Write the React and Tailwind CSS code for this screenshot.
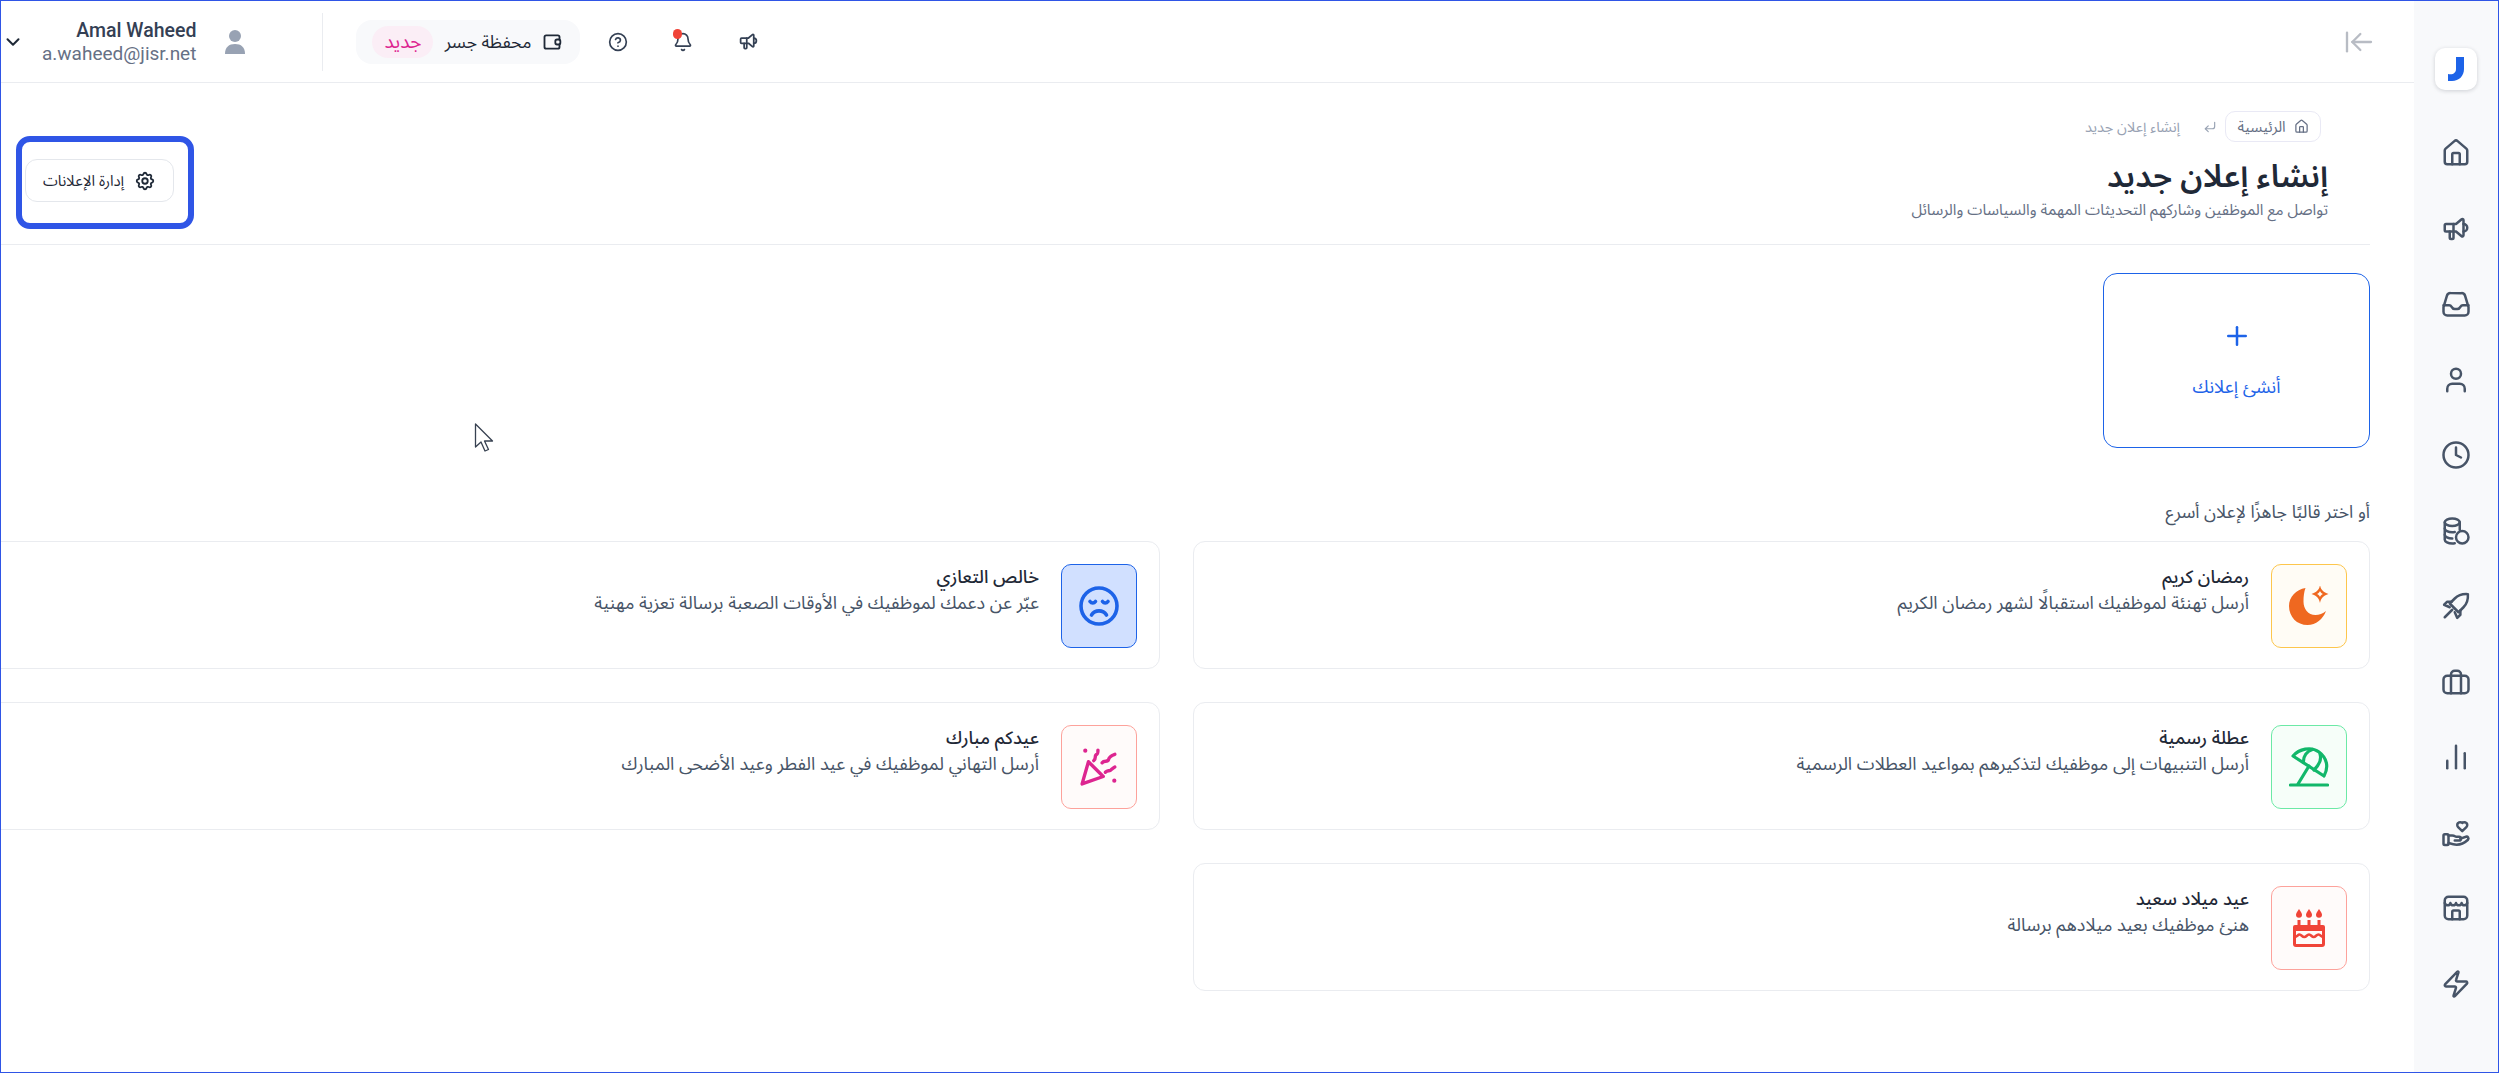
import React from "react";
import { ChevronDown, CircleHelp, Bell, House, User, Clock, ChartNoAxesColumn, Zap, Plus, CornerDownLeft, ArrowLeftToLine } from "lucide-react";
import { TbSettings, TbSpeakerphone } from "react-icons/tb";

const font = { fontFamily: '"Noto Sans", "Noto Sans Arabic", "DejaVu Sans", sans-serif' };

const line = { fill: "none", stroke: "currentColor", strokeWidth: 2, strokeLinecap: "round", strokeLinejoin: "round" };

function InboxIcon({ className }) {
  return (
    <svg className={className} viewBox="0 0 24 24" {...line}>
      <path d="M2 14.500l2.700-9A3 3 0 0 1 7.600 3.300h8.800a3 3 0 0 1 2.900 2.200l2.700 9v3.700a3 3 0 0 1-3 3H5a3 3 0 0 1-3-3z" />
      <path d="M2 13h4.500c1 0 1.600.6 2 1.300.5 1 1.500 1.700 2.500 1.700h2c1 0 2-.7 2.500-1.700.4-.7 1-1.300 2-1.300H22" />
    </svg>
  );
}

function RocketIcon({ className }) {
  return (
    <svg className={className} viewBox="0 0 24 24" {...line}>
      <path d="M21.500 2.500c-4-.3-8 1-10.500 3.500L7 10l7 7 4-4c2.500-2.500 3.800-6.500 3.500-10.500z" />
      <path d="M8.500 8.500H5L2.500 11l4.500 2" />
      <path d="M15.500 15.500V19L13 21.500 11 17" />
      <path d="M9 15l-6 6" />
    </svg>
  );
}

function HandIcon({ className }) {
  return (
    <svg className={className} viewBox="0 0 24 24" {...line}>
      <path d="M17 10.500l-3.300-3.200a2.300 2.300 0 0 1 0-3.300 2.300 2.300 0 0 1 3.300 0 2.300 2.300 0 0 1 3.300 0 2.300 2.300 0 0 1 0 3.300z" />
      <rect x="2" y="13" width="4" height="8.500" rx="1" />
      <path d="M6 14h3c1 0 2 .5 3 1h2.500a1.500 1.500 0 0 1 0 3H11" />
      <path d="M15.500 16.500l4.500-1.500a1.500 1.500 0 0 1 1.600 2.400c-3 2.800-6 4-9.100 4-2 0-4-.6-6.500-1.400" />
    </svg>
  );
}

function CoinsIcon({ className }) {
  return (
    <svg className={className} viewBox="0 0 24 24" {...line}>
      <ellipse cx="9" cy="5" rx="6" ry="3" />
      <path d="M3 5v14c0 1.600 2.700 3 6 3 .8 0 1.500-.1 2-.2" />
      <path d="M3 10c0 1.600 2.700 3 6 3 .8 0 1.500-.1 2-.2" />
      <path d="M3 15c0 1.600 2.700 3 6 3" />
      <path d="M15 5v6" />
      <circle cx="17" cy="17" r="5" />
    </svg>
  );
}

function CaseIcon({ className }) {
  return (
    <svg className={className} viewBox="0 0 24 24" {...line}>
      <rect x="2" y="7" width="20" height="14" rx="3" />
      <path d="M8 21V6a3 3 0 0 1 3-3h2a3 3 0 0 1 3 3v15" />
    </svg>
  );
}

function ShopIcon({ className }) {
  return (
    <svg className={className} viewBox="0 0 24 24" {...line}>
      <rect x="3" y="3" width="18" height="18" rx="3" />
      <path d="M3 8c1 2.500 4 2.500 4.500 0 .5 2.500 4 2.500 4.500 0 .5 2.500 4 2.500 4.500 0 .5 2.500 3.500 2.500 4.500 0" />
      <path d="M9 21v-6a1 1 0 0 1 1-1h4a1 1 0 0 1 1 1v6" />
    </svg>
  );
}

function WalletIcon({ className }) {
  return (
    <svg className={className} viewBox="0 0 24 24" {...line} strokeWidth="2.200">
      <path d="M21 9V6a2 2 0 0 0-2-2H5a2 2 0 0 0-2 2v12a2 2 0 0 0 2 2h14a2 2 0 0 0 2-2v-3" />
      <rect x="16" y="9" width="6" height="6" rx="2" />
    </svg>
  );
}

function MoonIcon({ className }) {
  return (
    <svg className={className} viewBox="0 0 40 40" fill="currentColor">
      <path d="M16.500 2C7 3.500 0 11 0 20c0 11 8 19 18.500 19C27 39 34 33 37 25c-3 2.500-7 4-10.500 4-7.500 0-12-6-12-13.500 0-5 .5-9.500 2-13.500z" />
      <path fillRule="evenodd" d="M31 -1c.8 4.500 3 7 8.500 9-5.500 2-7.700 4.500-8.500 9-.8-4.500-3-7-8.500-9 5.500-2 7.700-4.500 8.500-9zm0 6c-.6 1.300-1.500 2.200-3 3 1.500.8 2.400 1.700 3 3 .6-1.300 1.500-2.200 3-3-1.500-.8-2.400-1.700-3-3z" />
    </svg>
  );
}

function SadIcon({ className }) {
  return (
    <svg className={className} viewBox="0 0 40 40" fill="none" stroke="currentColor" strokeWidth="3.600" strokeLinecap="round">
      <circle cx="20" cy="20" r="18" />
      <path d="M11 15.500c1.500 2 4 2 5.500 0M23.500 15.500c1.500 2 4 2 5.500 0" />
      <path d="M12.500 29c3.500-5.500 11.500-5.500 15 0" />
    </svg>
  );
}

function BeachIcon({ className }) {
  return (
    <svg className={className} viewBox="0 0 40 40" fill="none" stroke="currentColor" strokeWidth="3.200" strokeLinecap="round" strokeLinejoin="round">
      <path d="M4 9C10 2 22-1 30 5c8 6 10 15 5 24z" />
      <path d="M14.500 15.500C14 9 18 4 23.500 2.500M25 23c5-5 8-10 6-16" />
      <path d="M20 19L9 37" />
      <path d="M1.500 38h37" />
    </svg>
  );
}

function PartyIcon({ className }) {
  return (
    <svg className={className} viewBox="0 0 36 36" fill="none" stroke="currentColor" strokeWidth="3.200" strokeLinecap="round" strokeLinejoin="round">
      <path d="M2 34l6-21 14 14z" />
      <path d="M13 12c3-2 0-5 3-6 1-.5 1-2 1-4" />
      <path d="M21 14c2-3 5 0 6-3 .5-2 3-4 6-5" />
      <path d="M24 23c2-2 3-1 5-2 1-.5 2-2 4-3" />
      <path d="M5 2.500v.01M32.500 31v.01" strokeWidth="4" />
    </svg>
  );
}

function CakeIcon({ className }) {
  return (
    <svg className={className} viewBox="0 0 32 38">
      <g fill="currentColor">
        <path d="M6 0c2 3 3 4.300 3 5.800a3 3 0 0 1-6 0C3 4.300 4 3 6 0z" />
        <path d="M16 0c2 3 3 4.300 3 5.800a3 3 0 0 1-6 0c0-1.500 1-2.800 3-5.800z" />
        <path d="M26 0c2 3 3 4.300 3 5.800a3 3 0 0 1-6 0c0-1.500 1-2.800 3-5.800z" />
        <rect x="4.500" y="11" width="3" height="6" />
        <rect x="14.500" y="11" width="3" height="6" />
        <rect x="24.500" y="11" width="3" height="6" />
        <rect x="0" y="16" width="32" height="6" rx="2" />
      </g>
      <path d="M1.500 18v17c0 .8.700 1.500 1.500 1.500h26c.8 0 1.500-.7 1.500-1.500V18" fill="none" stroke="currentColor" strokeWidth="3" />
      <path d="M1.500 28c3 0 3-2.500 5-2.500s2.500 2.500 4.800 2.500 2.500-2.500 4.700-2.500 2.500 2.500 4.700 2.500 2.500-2.500 4.800-2.500 2 2.500 5 2.500" fill="none" stroke="currentColor" strokeWidth="2.600" />
    </svg>
  );
}

const templates = [
  { title: "رمضان كريم", desc: "أرسل تهنئة لموظفيك استقبالًا لشهر رمضان الكريم", box: "bg-[#fffcf5] border-[#fdc64c]", color: "text-[#ef6820]", Icon: MoonIcon, size: "w-[40px] h-[40px]" },
  { title: "خالص التعازي", desc: "عبّر عن دعمك لموظفيك في الأوقات الصعبة برسالة تعزية مهنية", box: "bg-[#d1e0ff] border-[#1d63e8]", color: "text-[#1d63e8]", Icon: SadIcon, size: "w-[40px] h-[40px]" },
  { title: "عطلة رسمية", desc: "أرسل التنبيهات إلى موظفيك لتذكيرهم بمواعيد العطلات الرسمية", box: "bg-[#f6fef9] border-[#6ce9a6]", color: "text-[#12b76a]", Icon: BeachIcon, size: "w-[40px] h-[40px]" },
  { title: "عيدكم مبارك", desc: "أرسل التهاني لموظفيك في عيد الفطر وعيد الأضحى المبارك", box: "bg-[#fffbfa] border-[#fda29b]", color: "text-[#dd2590]", Icon: PartyIcon, size: "w-[38px] h-[38px]" },
  { title: "عيد ميلاد سعيد", desc: "هنئ موظفيك بعيد ميلادهم برسالة", box: "bg-[#fffbfa] border-[#fda29b]", color: "text-[#f04438]", Icon: CakeIcon, size: "w-[32px] h-[38px]" },
];

const navItems = [
  { Icon: House, k: "home" },
  { Icon: TbSpeakerphone, k: "announce" },
  { Icon: InboxIcon, k: "inbox" },
  { Icon: User, k: "user" },
  { Icon: Clock, k: "clock" },
  { Icon: CoinsIcon, k: "coins" },
  { Icon: RocketIcon, k: "rocket" },
  { Icon: CaseIcon, k: "case" },
  { Icon: ChartNoAxesColumn, k: "chart" },
  { Icon: HandIcon, k: "hand" },
  { Icon: ShopIcon, k: "shop" },
  { Icon: Zap, k: "zap" },
];

function TemplateCard({ item }) {
  const { Icon } = item;
  return (
    <div className="h-[128px] bg-white border border-[#eaecf0] rounded-[12px] flex items-start gap-[22px] pr-[22px] pt-[22px]">
      <div className={`w-[76px] h-[84px] shrink-0 rounded-[10px] border flex items-center justify-center ${item.box}`}>
        <Icon className={`${item.color} ${item.size}`} />
      </div>
      <div className="-mt-[1px]">
        <div className="text-[18px] leading-[26px] font-medium text-[#1f2937]">{item.title}</div>
        <div className="text-[18px] leading-[26px] text-[#475467]">{item.desc}</div>
      </div>
    </div>
  );
}

export default function App() {
  return (
    <div dir="rtl" style={font} className="relative h-[1073px] w-full flex overflow-hidden bg-white border border-[#2f55e6]">
      {/* sidebar */}
      <aside className="w-[84px] shrink-0 bg-[#f8f9fb] flex flex-col items-center pt-[47px]">
        <div className="w-[42px] h-[42px] bg-white rounded-[10px] shadow-[0_1px_4px_rgba(16,24,40,0.18)] flex items-center justify-center">
          <svg className="w-[18px] h-[24px]" viewBox="0 0 18 24" fill="#1d63e8">
            <path d="M9 0h8v12c0 7-5 12-12 12H1v-7c5 1 8-1 8-5z" />
          </svg>
        </div>
        <div className="flex flex-col items-center gap-[45.5px] mt-[48px] text-[#475467]">
          {navItems.map(({ Icon, k }) => (
            <Icon key={k} className="w-[30px] h-[30px]" />
          ))}
        </div>
      </aside>

      <main className="flex-1 min-w-0 overflow-hidden">
        {/* top bar */}
        <header className="h-[82px] border-b border-[#eaecf0] flex items-center justify-between pr-[39px] pl-[1px]">
          <ArrowLeftToLine className="w-[32px] h-[32px] text-[#b8bcc4]" strokeWidth={1.750} />
          <div className="flex items-center">
            <TbSpeakerphone className="w-[21px] h-[21px] text-[#344054]" />
            <div className="relative mr-[45px]">
              <Bell className="w-[20px] h-[20px] text-[#344054]" />
              <span className="absolute -top-[3px] right-[11px] w-[9px] h-[10px] rounded-full bg-[#f04438]" />
            </div>
            <CircleHelp className="w-[20px] h-[20px] text-[#344054] mr-[45px]" />
            <div className="h-[44px] w-[224px] mr-[28px] rounded-[16px] bg-[#f8f9fb] flex items-center pr-[18px] pl-[16px] justify-between">
              <div className="flex items-center gap-[11px]">
                <WalletIcon className="w-[20px] h-[20px] text-[#1f2937]" />
                <span className="text-[17.5px] text-[#1f2937] whitespace-nowrap">محفظة جسر</span>
              </div>
              <span className="w-[61px] h-[32px] rounded-full bg-[#fbeef6] text-[#dd2590] text-[19px] flex items-center justify-center">جديد</span>
            </div>
            <div className="w-px h-[58px] bg-[#eaecf0] mr-[33px]" />
            <svg className="w-[22px] h-[26px] text-[#98a2b3] mr-[76px]" viewBox="0 0 22 26" fill="currentColor">
              <circle cx="11" cy="7" r="6" />
              <path d="M1 25c0-7 4-10 10-10s10 3 10 10z" />
            </svg>
            <div dir="ltr" className="mr-[28px] text-right" style={{ fontFamily: "Roboto, sans-serif" }}>
              <div className="text-[19.5px] leading-[23px] font-medium text-[#344054]">Amal Waheed</div>
              <div className="text-[19px] leading-[23px] text-[#667085]">a.waheed@jisr.net</div>
            </div>
            <ChevronDown className="w-[22px] h-[22px] text-[#1f2937] mr-[18px]" strokeWidth={2.200} />
          </div>
        </header>

        {/* page heading */}
        <section className="mr-[44px] h-[162px] border-b border-[#eaecf0] flex justify-between pr-[42px] pl-[24px] pt-[28px]">
          <div>
            <div className="flex items-center mr-[7px]">
              <div className="h-[31px] w-[96px] rounded-[10px] border border-[#e9e9f5] flex items-center justify-center gap-[8px] text-[#667085]">
                <House className="w-[15px] h-[15px]" />
                <span className="text-[15px]">الرئيسية</span>
              </div>
              <CornerDownLeft className="w-[14px] h-[14px] text-[#98a2b3] mr-[8px]" />
              <span className="text-[14.5px] text-[#98a2b3] mr-[23px]">إنشاء إعلان جديد</span>
            </div>
            <h1 className="text-[31.5px] leading-[40px] font-semibold text-[#1f2937] mt-[13px]">إنشاء إعلان جديد</h1>
            <p className="text-[15.3px] leading-[24px] text-[#667085] mt-[2px]">تواصل مع الموظفين وشاركهم التحديثات المهمة والسياسات والرسائل</p>
          </div>
          <div className="relative mt-[48px] h-[43px] w-[149px] rounded-[12px] border border-[#e4e7ec] bg-white flex items-center justify-center gap-[10px]">
            <TbSettings className="w-[22px] h-[22px] text-[#1f2937]" />
            <span className="text-[15px] text-[#1f2937] whitespace-nowrap">إدارة الإعلانات</span>
            {/* annotation drawn on the screenshot */}
            <div className="absolute -top-[24px] -bottom-[28px] -left-[10px] -right-[21px] border-[6px] border-[#2f55e6] rounded-[14px] pointer-events-none" />
          </div>
        </section>

        <section className="mr-[44px] pt-[28px]">
          <div className="w-[267px] h-[175px] rounded-[14px] border border-[#1d63e8] flex flex-col items-center text-[#1d63e8]">
            <Plus className="w-[30px] h-[30px] mt-[47px]" strokeWidth={2} />
            <span className="text-[18px] mt-[22px]">أنشئ إعلانك</span>
          </div>
          <div className="text-[17.7px] leading-[26px] text-[#475467] mt-[50px]">أو اختر قالبًا جاهزًا لإعلان أسرع</div>
          <div className="grid grid-cols-[1177px_1177px] gap-x-[33px] gap-y-[33px] mt-[17px] w-max">
            {templates.map((t) => (
              <TemplateCard key={t.title} item={t} />
            ))}
          </div>
        </section>
      </main>

      {/* mouse cursor caught in the screenshot */}
      <svg className="absolute left-[473px] top-[422px] w-[20px] h-[30px]" viewBox="0 0 20 30" fill="#fff" stroke="#374151" strokeWidth="1.300" strokeLinejoin="round">
        <path d="M1.500 1v23l5.500-5 4 9 3.500-1.500-4-8.500h8z" />
      </svg>
    </div>
  );
}
